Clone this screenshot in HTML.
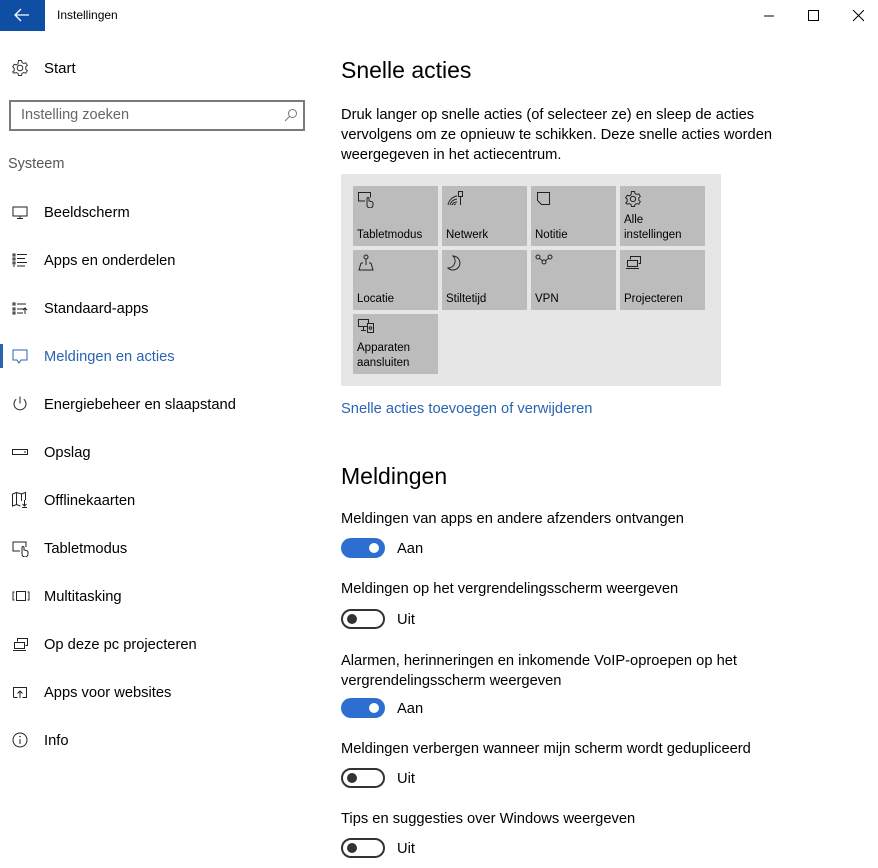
<!DOCTYPE html>
<html><head><meta charset="utf-8">
<style>
*{margin:0;padding:0;box-sizing:border-box}
body{width:878px;height:868px;background:#fff;font-family:"Liberation Sans",sans-serif;color:#000;position:relative;overflow:hidden}
.a{position:absolute;white-space:nowrap}
.nav{position:absolute;left:0;width:320px;height:48px}
.nav svg{position:absolute;left:11px;top:50%;transform:translateY(-50%)}
.nav span{position:absolute;left:44px;top:25px;transform:translateY(-50%);font-size:14.7px;color:#000}
.tile{position:absolute;width:85px;height:60px;background:#bcbcbc}
.tile svg{position:absolute;left:4px;top:4px}
.tile span{position:absolute;left:4px;bottom:3px;font-size:11.5px;line-height:15px;color:#000}
.p{font-size:14.7px;color:#000}
.tog{position:absolute;left:341px;width:44px;height:20px;border-radius:10px}
.on{background:#2d6fd1}
.on:after{content:"";position:absolute;right:6px;top:5px;width:10px;height:10px;border-radius:50%;background:#fff}
.off{border:2px solid #333}
.off:after{content:"";position:absolute;left:4px;top:3px;width:10px;height:10px;border-radius:50%;background:#333}
</style></head><body>
<div class="a" style="left:0;top:0;width:45px;height:31px;background:#0e4ea3"></div>
<svg class="a" style="left:14px;top:8px" width="16" height="14" viewBox="0 0 16 14"><path d="M1 7H15M7 1L1 7L7 13" stroke="#fff" stroke-width="1.3" fill="none"/></svg>
<div class="a" style="left:57px;top:8px;font-size:12px">Instellingen</div>
<svg class="a" style="left:764px;top:10px" width="100" height="12" viewBox="0 0 100 12"><path d="M0 6H10" stroke="#000"/><rect x="44.5" y="0.5" width="10" height="10" stroke="#000" fill="none"/><path d="M89 0L100 11M100 0L89 11" stroke="#000"/></svg>

<svg class="a" style="left:11px;top:59px" width="18" height="18" viewBox="0 0 18 18"><circle cx="9" cy="9" r="2.8" stroke="#333" fill="none"/><path d="M7.5 1.5h3l.5 2 1.8 1 2-.7 1.5 2.6-1.5 1.4v2.4l1.5 1.4-1.5 2.6-2-.7-1.8 1-.5 2h-3l-.5-2-1.8-1-2 .7L1.7 13l1.5-1.4V9.2L1.7 7.8 3.2 5.2l2 .7 1.8-1z" stroke="#333" fill="none"/></svg>
<div class="a" style="left:44px;top:60px;font-size:15px">Start</div>
<div class="a" style="left:9px;top:100px;width:296px;height:31px;border:2px solid #7a7a7a"></div>
<div class="a" style="left:21px;top:107px;font-size:14.5px;color:#666">Instelling zoeken</div>
<svg class="a" style="left:284px;top:108px" width="14" height="14" viewBox="0 0 14 14"><circle cx="8.5" cy="5.5" r="4" stroke="#777" fill="none"/><path d="M5.5 8.5L1 13" stroke="#777"/></svg>
<div class="a" style="left:8px;top:156px;font-size:14.5px;color:#555">Systeem</div>

<div class="nav" style="top:188px"><svg width="18" height="16" viewBox="0 0 18 16"><rect x="2" y="3" width="14" height="9" stroke="#222" fill="none"/><path d="M9 12v2M6 14.5h6" stroke="#222"/></svg><span>Beeldscherm</span></div>
<div class="nav" style="top:236px"><svg width="18" height="16" viewBox="0 0 18 16"><path d="M2 2h2v2H2zM2 6h2v2H2zM2 10h2v2H2zM2 14h2v-0" stroke="#222" fill="none"/><path d="M6 2.5h10M6 6.5h8M6 10.5h10M6 14h8" stroke="#222"/></svg><span>Apps en onderdelen</span></div>
<div class="nav" style="top:284px"><svg width="18" height="16" viewBox="0 0 18 16"><path d="M2 3h2v2H2zM2 8h2v2H2zM2 12h2v2H2z" stroke="#222" fill="none"/><path d="M6 4h9M6 9h7M6 13h6M14 8v6M12 10l2-2 2 2" stroke="#222" fill="none"/></svg><span>Standaard-apps</span></div>
<div class="a" style="left:0;top:344px;width:3px;height:24px;background:#2a64b0"></div>
<div class="nav" style="top:332px"><svg width="18" height="16" viewBox="0 0 18 16"><path d="M2 2h14v10H10l-2 3-2-3H2z" stroke="#2a64b0" fill="none"/></svg><span style="color:#2a64b0">Meldingen en acties</span></div>
<div class="nav" style="top:380px"><svg width="18" height="18" viewBox="0 0 18 18"><path d="M9 1.5v7M5.2 4.2a6 6 0 1 0 7.6 0" stroke="#222" fill="none"/></svg><span>Energiebeheer en slaapstand</span></div>
<div class="nav" style="top:428px"><svg width="18" height="16" viewBox="0 0 18 16"><rect x="1.5" y="5.5" width="15" height="5" stroke="#222" fill="none"/><path d="M13 8h2" stroke="#222"/></svg><span>Opslag</span></div>
<div class="nav" style="top:476px"><svg width="18" height="18" viewBox="0 0 18 18"><path d="M1.5 3l4-1.5 5 1.5 4-1.5V9M1.5 3v12l4-1.5 4 1.5M5.5 1.5v12M10.5 3v7M13.5 9v6M11.5 13l2 2 2-2M11 16.5h5" stroke="#222" fill="none"/></svg><span>Offlinekaarten</span></div>
<div class="nav" style="top:524px"><svg width="20" height="18" viewBox="0 0 20 18"><path d="M9 12H2V3h13v5" stroke="#222" fill="none"/><path d="M11 15V8.5a1 1 0 0 1 2 0V11l3 .7a2 2 0 0 1 1 2V15a3 3 0 0 1-6 0z" stroke="#222" fill="none"/></svg><span>Tabletmodus</span></div>
<div class="nav" style="top:572px"><svg width="20" height="16" viewBox="0 0 20 16"><rect x="5.5" y="3.5" width="9" height="9" stroke="#222" fill="none"/><path d="M3.5 4H2v8h1.5M16.5 4H18v8h-1.5" stroke="#222" fill="none"/></svg><span>Multitasking</span></div>
<div class="nav" style="top:620px"><svg width="20" height="16" viewBox="0 0 20 16"><path d="M6.5 5.5V2.5h10v7h-2" stroke="#222" fill="none"/><rect x="3.5" y="6.5" width="10" height="6" stroke="#222" fill="none"/><path d="M2 14.5h13" stroke="#222"/></svg><span>Op deze pc projecteren</span></div>
<div class="nav" style="top:668px"><svg width="18" height="16" viewBox="0 0 18 16"><path d="M2.5 13.5v-10h13v10h-4M6.5 13.5h-4" stroke="#222" fill="none"/><path d="M9 14V7M6.5 9.5L9 7l2.5 2.5" stroke="#222" fill="none"/></svg><span>Apps voor websites</span></div>
<div class="nav" style="top:716px"><svg width="18" height="18" viewBox="0 0 18 18"><circle cx="9" cy="9" r="7" stroke="#222" fill="none"/><path d="M9 8v5" stroke="#222"/><circle cx="9" cy="5.5" r=".8" fill="#222"/></svg><span>Info</span></div>

<div class="a" style="left:341px;top:57px;font-size:23px;color:#000">Snelle acties</div>
<div class="a p" style="left:341px;top:105px;line-height:20px">Druk langer op snelle acties (of selecteer ze) en sleep de acties<br>vervolgens om ze opnieuw te schikken. Deze snelle acties worden<br>weergegeven in het actiecentrum.</div>

<div class="a" style="left:341px;top:174px;width:380px;height:212px;background:#e6e6e6"></div>
<div class="tile" style="left:353px;top:186px"><svg width="20" height="18" viewBox="0 0 20 18"><path d="M8 11H1.5V2.5h12v5" stroke="#222" fill="none"/><path d="M10 15V8.5a1 1 0 0 1 2 0V11l3 .7a2 2 0 0 1 1 2V15a3 3 0 0 1-6 0z" stroke="#222" fill="none"/></svg><span>Tabletmodus</span></div>
<div class="tile" style="left:442px;top:186px"><svg width="20" height="18" viewBox="0 0 20 18"><path d="M2 15a11 11 0 0 1 9-9M4 15a8 8 0 0 1 7-6M6 15a5 5 0 0 1 5-3M8 15a2 2 0 0 1 2-1" stroke="#222" fill="none"/><rect x="12.5" y="1.5" width="4" height="5" stroke="#222" fill="none"/><path d="M14.5 7v8" stroke="#222"/></svg><span>Netwerk</span></div>
<div class="tile" style="left:531px;top:186px"><svg width="18" height="18" viewBox="0 0 18 18"><path d="M2.5 2.5h12v12H6.5l-4-4z" stroke="#222" fill="none"/></svg><span>Notitie</span></div>
<div class="tile" style="left:620px;top:186px"><svg width="18" height="18" viewBox="0 0 18 18"><circle cx="9" cy="9" r="2.6" stroke="#222" fill="none"/><path d="M7.5 1.5h3l.5 2 1.8 1 2-.7 1.5 2.6-1.5 1.4v2.4l1.5 1.4-1.5 2.6-2-.7-1.8 1-.5 2h-3l-.5-2-1.8-1-2 .7L1.7 13l1.5-1.4V9.2L1.7 7.8 3.2 5.2l2 .7 1.8-1z" stroke="#222" fill="none"/></svg><span>Alle<br>instellingen</span></div>
<div class="tile" style="left:353px;top:250px"><svg width="18" height="18" viewBox="0 0 18 18"><circle cx="9" cy="3" r="2" stroke="#222" fill="none"/><path d="M9 5v6M4 9h2M12 9h2M4 9L2 16h14l-2-7" stroke="#222" fill="none"/></svg><span>Locatie</span></div>
<div class="tile" style="left:442px;top:250px"><svg width="18" height="18" viewBox="0 0 18 18"><path d="M7 2a7 7 0 0 1-5 12 7 7 0 1 0 5-12z" stroke="#222" fill="none"/></svg><span>Stiltetijd</span></div>
<div class="tile" style="left:531px;top:250px"><svg width="18" height="12" viewBox="0 0 18 12"><circle cx="3" cy="3" r="2" stroke="#222" fill="none"/><circle cx="9" cy="8" r="2" stroke="#222" fill="none"/><circle cx="15" cy="3" r="2" stroke="#222" fill="none"/><path d="M4.5 4.5l3 2M10.5 6.5l3-2" stroke="#222"/></svg><span>VPN</span></div>
<div class="tile" style="left:620px;top:250px"><svg width="20" height="16" viewBox="0 0 20 16"><path d="M6.5 5.5V2.5h10v7h-2" stroke="#222" fill="none"/><rect x="3.5" y="6.5" width="10" height="6" stroke="#222" fill="none"/><path d="M2 14.5h13" stroke="#222"/></svg><span>Projecteren</span></div>
<div class="tile" style="left:353px;top:314px"><svg width="20" height="16" viewBox="0 0 20 16"><path d="M1.5 1.5h10v7h-10zM6.5 9v3M4 12.5h5" stroke="#222" fill="none"/><rect x="10.5" y="5.5" width="6" height="9" stroke="#222" fill="#bcbcbc"/><circle cx="13.5" cy="10" r="1.3" stroke="#222" fill="none"/></svg><span>Apparaten<br>aansluiten</span></div>

<div class="a" style="left:341px;top:401px;font-size:14.7px;color:#2a64b0">Snelle acties toevoegen of verwijderen</div>
<div class="a" style="left:341px;top:463px;font-size:23px">Meldingen</div>

<div class="a p" style="left:341px;top:511px">Meldingen van apps en andere afzenders ontvangen</div>
<div class="tog on" style="top:538px"></div><div class="a p" style="left:397px;top:541px">Aan</div>
<div class="a p" style="left:341px;top:581px">Meldingen op het vergrendelingsscherm weergeven</div>
<div class="tog off" style="top:609px"></div><div class="a p" style="left:397px;top:612px">Uit</div>
<div class="a p" style="left:341px;top:651px;line-height:20px">Alarmen, herinneringen en inkomende VoIP-oproepen op het<br>vergrendelingsscherm weergeven</div>
<div class="tog on" style="top:698px"></div><div class="a p" style="left:397px;top:701px">Aan</div>
<div class="a p" style="left:341px;top:741px">Meldingen verbergen wanneer mijn scherm wordt gedupliceerd</div>
<div class="tog off" style="top:768px"></div><div class="a p" style="left:397px;top:771px">Uit</div>
<div class="a p" style="left:341px;top:811px">Tips en suggesties over Windows weergeven</div>
<div class="tog off" style="top:838px"></div><div class="a p" style="left:397px;top:841px">Uit</div>
</body></html>
